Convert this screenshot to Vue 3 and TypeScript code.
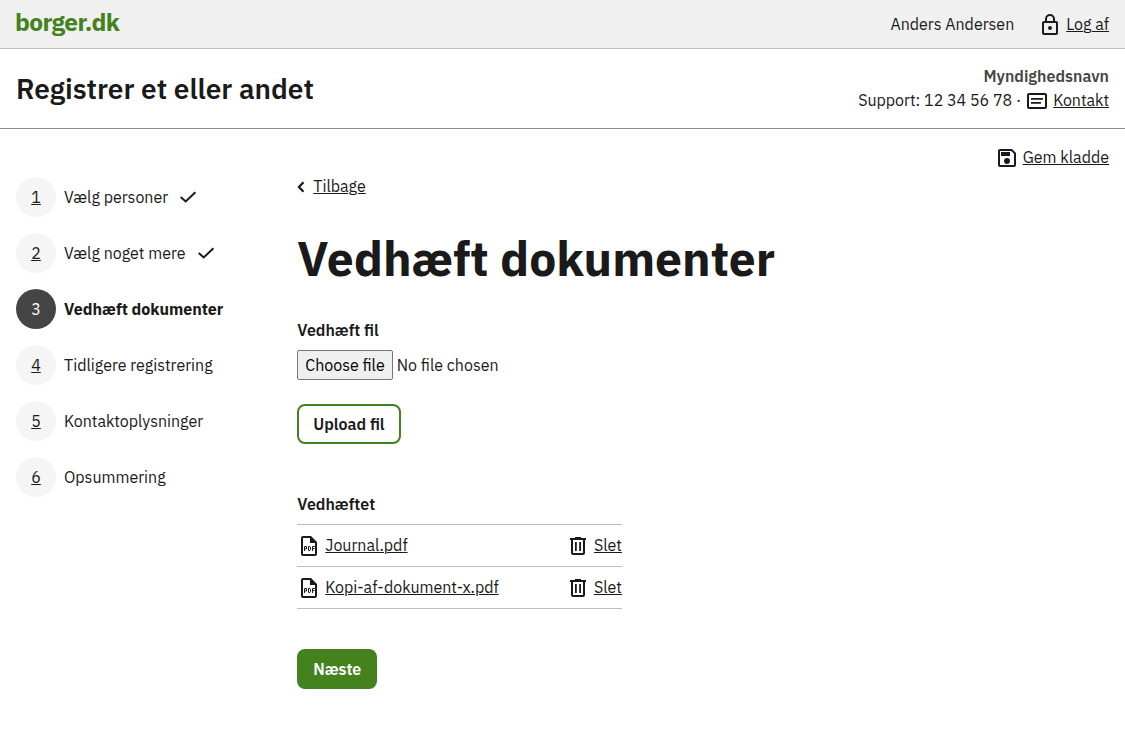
<script setup lang="ts">
interface Step {
  label: string
  state: 'done' | 'current' | 'todo'
}

const steps: Step[] = [
  { label: 'Vælg personer', state: 'done' },
  { label: 'Vælg noget mere', state: 'done' },
  { label: 'Vedhæft dokumenter', state: 'current' },
  { label: 'Tidligere registrering', state: 'todo' },
  { label: 'Kontaktoplysninger', state: 'todo' },
  { label: 'Opsummering', state: 'todo' },
]

const files: string[] = ['Journal.pdf', 'Kopi-af-dokument-x.pdf']
</script>

<template>
  <div class="page">
    <header class="topbar">
      <a class="logo">borger.dk</a>
      <div class="account">
        <span>Anders Andersen</span>
        <a class="action">
          <svg class="icon" viewBox="0 0 24 24">
            <path fill-rule="evenodd" d="M18 8h-1V6A5 5 0 0 0 7 6v2H6a2 2 0 0 0-2 2v10a2 2 0 0 0 2 2h12a2 2 0 0 0 2-2V10a2 2 0 0 0-2-2zM9 6a3 3 0 0 1 6 0v2H9zM18 20H6V10h12zm-6-3a2 2 0 1 0 0-4 2 2 0 0 0 0 4z" />
          </svg>
          <span class="link">Log af</span>
        </a>
      </div>
    </header>

    <div class="solution">
      <p class="solution-title">Registrer et eller andet</p>
      <div class="authority">
        <strong>Myndighedsnavn</strong>
        <div class="support">
          <span>Support: 12 34 56 78 ·</span>
          <a class="action">
            <svg class="icon" viewBox="0 0 24 24">
              <path fill-rule="evenodd" d="M20 4H4a2 2 0 0 0-2 2v12a2 2 0 0 0 2 2h16a2 2 0 0 0 2-2V6a2 2 0 0 0-2-2zm0 14H4V6h16zM6 9h12v1.700H6zm0 4h10v1.700H6z" />
            </svg>
            <span class="link">Kontakt</span>
          </a>
        </div>
      </div>
    </div>

    <div class="draft">
      <a class="action">
        <svg class="icon" viewBox="0 0 24 24">
          <path fill-rule="evenodd" d="M17 3H5a2 2 0 0 0-2 2v14a2 2 0 0 0 2 2h14a2 2 0 0 0 2-2V7zm2 16H5V5h11.200L19 7.800zM12 12a3 3 0 1 0 0 6 3 3 0 0 0 0-6zM6 6h9v4H6z" />
        </svg>
        <span class="link">Gem kladde</span>
      </a>
    </div>

    <div class="columns">
      <nav>
        <ol class="steps">
          <li v-for="(step, i) in steps" :key="step.label" :class="['step', step.state]">
            <span class="number">{{ i + 1 }}</span>
            <span>{{ step.label }}</span>
            <svg v-if="step.state === 'done'" class="icon check" viewBox="0 0 24 24">
              <path d="M4.700 12l5 4.500 9.700-9.200" />
            </svg>
          </li>
        </ol>
      </nav>

      <main>
        <a class="back">
          <svg viewBox="0 0 8 12"><path d="M6.500 1.200L1.900 6l4.600 4.800" /></svg>
          <span class="link">Tilbage</span>
        </a>
        <h1>Vedhæft dokumenter</h1>

        <span class="field-label">Vedhæft fil</span>
        <label class="file-input">
          <input type="file" hidden />
          <span class="choose">Choose file</span>
          <span>No file chosen</span>
        </label>
        <button class="button secondary" type="button">Upload fil</button>

        <h2>Vedhæftet</h2>
        <ul class="files">
          <li v-for="file in files" :key="file">
            <a class="action">
              <svg class="icon" viewBox="0 0 24 24">
                <path fill-rule="evenodd" d="M6 2h8l6 6v12a2 2 0 0 1-2 2H6a2 2 0 0 1-2-2V4a2 2 0 0 1 2-2zm0 2v16h12V9h-5V4z" />
                <path class="stroke" d="M7.500 17v-4.500h2v2.500h-2M11.500 12.500h1.300l.7.700v2.600l-.7.700h-1.300zM15.500 17v-4.500h2.300M15.500 14.500h2" />
              </svg>
              <span class="link">{{ file }}</span>
            </a>
            <a class="action">
              <svg class="icon" viewBox="0 0 24 24">
                <path fill-rule="evenodd" d="M15 4V3H9v1H4v2h1v13a2 2 0 0 0 2 2h10a2 2 0 0 0 2-2V6h1V4zM7 6h10v13H7zm2 2h1.800v9H9zm4.200 0H15v9h-1.800z" />
              </svg>
              <span class="link">Slet</span>
            </a>
          </li>
        </ul>

        <button class="button primary" type="button">Næste</button>
      </main>
    </div>
  </div>
</template>

<style>
body {
  background: #fff;
}
</style>

<style scoped>
.page {
  font: 400 16px/24px "IBM Plex Sans", Roboto, "Noto Sans", sans-serif;
  color: #1a1a1a;
}
.topbar {
  display: flex;
  justify-content: space-between;
  align-items: center;
  box-sizing: border-box;
  height: 49px;
  padding: 0 16px;
  background: #f0f0f0;
  border-bottom: 1px solid #bebebe;
}
.logo {
  margin: -4px 0 0 -1px;
  color: #44821e;
  font-size: 24.500px;
  font-weight: 700;
  letter-spacing: -0.600px;
}
.account,
.action {
  display: flex;
  align-items: center;
}
.action {
  gap: 4px;
}
.account {
  gap: 24px;
}
.icon {
  display: block;
  flex: none;
  width: 24px;
  height: 24px;
  fill: #1a1a1a;
}
.action .icon {
  margin: 1px 0 -1px;
}
.stroke {
  fill: none;
  stroke: #1a1a1a;
  stroke-width: 1;
}
.check {
  fill: none;
  stroke: #1a1a1a;
  stroke-width: 2;
}
.link {
  text-decoration: underline;
  text-underline-offset: 1px;
  text-decoration-thickness: 1px;
}
.solution {
  display: flex;
  justify-content: space-between;
  align-items: center;
  box-sizing: border-box;
  height: 80px;
  padding: 0 16px;
  border-bottom: 1px solid #8b8b8b;
}
.solution-title {
  margin: 1px 0 0;
  font-size: 28px;
  line-height: 36px;
  font-weight: 600;
}
.authority {
  margin-bottom: 1px;
  text-align: right;
}
.authority strong {
  display: block;
  color: #454545;
  font-weight: 600;
}
.support {
  display: flex;
  gap: 4px;
}
.draft {
  display: flex;
  justify-content: flex-end;
  padding: 16px 16px 0;
}
.columns {
  display: grid;
  grid-template-columns: 281.250px 1fr;
  padding: 0 16px;
}
.steps,
.files {
  margin: 0;
  padding: 0;
  list-style: none;
}
.steps {
  display: grid;
  gap: 16px;
  padding-top: 8px;
}
.step {
  display: flex;
  align-items: center;
  gap: 8px;
}
.number {
  width: 40px;
  height: 40px;
  border-radius: 50%;
  background: #f5f5f5;
  line-height: 40px;
  text-align: center;
  text-decoration: underline;
  text-underline-offset: 1px;
  text-decoration-thickness: 1px;
}
.current {
  font-weight: 700;
}
.current .number {
  background: #454545;
  color: #fff;
  font-weight: 400;
  text-decoration: none;
}
main {
  display: flex;
  flex-direction: column;
  align-items: flex-start;
  padding-top: 5px;
}
.back {
  display: flex;
  align-items: center;
  gap: 8px;
}
.back svg {
  width: 8px;
  height: 12px;
  margin-top: 2px;
  fill: none;
  stroke: #1a1a1a;
  stroke-width: 2.200;
}
h1 {
  margin: 32px 0;
  font-size: 48px;
  line-height: 56px;
  font-weight: 700;
}
.field-label {
  margin-bottom: 8px;
  font-weight: 600;
}
.file-input {
  display: flex;
  align-items: center;
  gap: 4px;
}
.choose {
  padding: 2px 7px;
  border: 1px solid #767676;
  border-radius: 2px;
  background: #efefef;
  color: #000;
}
.button {
  height: 40px;
  padding: 0 14px;
  border: 2px solid #44821e;
  border-radius: 8px;
  font: inherit;
  font-weight: 600;
}
.secondary {
  margin-top: 24px;
  background: #fff;
  color: #1a1a1a;
}
.primary {
  margin-top: 40px;
  background: #44821e;
  color: #fff;
}
h2 {
  margin: 48px 0 8px;
  font-size: 16px;
  line-height: 24px;
  font-weight: 600;
}
.files {
  width: 324.750px;
  border-top: 1px solid #bebebe;
}
.files li {
  display: flex;
  justify-content: space-between;
  align-items: flex-start;
  box-sizing: border-box;
  height: 42px;
  padding-top: 8px;
  border-bottom: 1px solid #bebebe;
}
</style>
